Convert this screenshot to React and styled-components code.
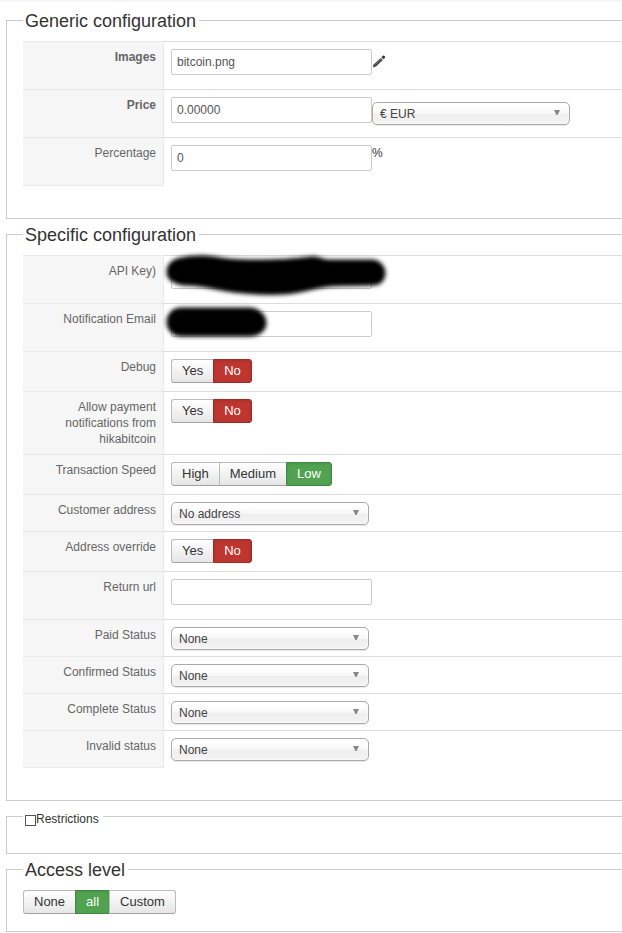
import React, { useState } from "react";
import styled, { createGlobalStyle, css } from "styled-components";

const GlobalStyle = createGlobalStyle`
  * { box-sizing: border-box; }
  body {
    margin: 0;
    background: #fff;
    color: #333;
    font: 12px/16px "Liberation Sans", Arial, Helvetica, sans-serif;
  }
  button, input, select { font: inherit; }
`;

const Page = styled.form`
  display: flex;
  flex-direction: column;
  gap: 5px;
  padding: 8px 0 0 6px;
  border-top: 2px solid #f5f5f5;
`;

const Panel = styled.fieldset`
  min-width: 0;
  margin: 0;
  padding: 10px 0 16px 16px;
  border: 1px solid #ccc;
  border-right: 0;
`;

const Title = styled.legend`
  height: 21px;
  padding: 0 3px 0 2px;
  font-size: 18px;
  line-height: 23px;
`;

const CheckTitle = styled.legend`
  height: 21px;
  padding: 5px 4px 0 2px;

  label {
    display: flex;
    align-items: center;
  }
`;

const CheckBox = styled.input`
  appearance: none;
  width: 11px;
  height: 11px;
  margin: 2px 0 0;
  border: 1px solid #555;
  background: #fff;
  &:checked { background: #555; }
`;

const SettingsTable = styled.table`
  width: 100%;
  margin-bottom: 16px;
  border-collapse: separate;
  border-spacing: 0;
  table-layout: fixed;
`;

const LabelColumn = styled.col`
  width: 141px;
`;

const LabelCell = styled.th`
  padding: 7px;
  border-top: 1px solid #e9e9e9;
  border-right: 1px solid #e9e9e9;
  background: #f6f6f6;
  color: #666;
  font-weight: ${(p) => (p.$strong ? "bold" : "normal")};
  text-align: right;
  vertical-align: top;
  tr:last-child > & { border-bottom: 1px solid #e9e9e9; }
`;

const ValueCell = styled.td`
  padding: 7px;
  border-top: 1px solid #ddd;
  vertical-align: top;
  tr:last-child > & { border-bottom: 1px solid transparent; }
`;

const ControlLine = styled.div`
  display: flex;
  align-items: flex-start;
`;

const InputWrap = styled.div`
  position: relative;
  width: 201px;
  margin-bottom: 7px;
`;

const TextInput = styled.input`
  display: block;
  width: 100%;
  height: 26px;
  padding: 4px 5px;
  border: 1px solid #ccc;
  border-radius: 2px;
  background: #fff;
  color: #555;
`;

const Redaction = styled.svg`
  position: absolute;
  left: -16px;
  top: -16px;
  overflow: visible;
  pointer-events: none;
`;

const IconButton = styled.button`
  display: flex;
  margin-top: 5px;
  padding: 0;
  border: 0;
  background: none;
`;

const SelectWrap = styled.div`
  position: relative;
  width: 198px;
  margin-top: ${(p) => (p.$lowered ? "5px" : "0")};
  margin-bottom: -1px;
`;

const Select = styled.select`
  appearance: none;
  display: block;
  width: 100%;
  height: 23px;
  padding: 0 24px 0 7px;
  border: 1px solid #aaa;
  border-radius: 5px;
  background: linear-gradient(#fff 20%, #f6f6f6 50%, #eee 52%, #f4f4f4 100%);
  box-shadow: inset 0 0 3px #fff, 0 1px 1px rgba(0, 0, 0, 0.1);
  color: #444;
`;

const Arrow = styled.svg`
  position: absolute;
  top: 8px;
  right: 10px;
  pointer-events: none;
`;

const Group = styled.div`
  display: flex;
  margin-bottom: 1px;
`;

const tones = {
  red: css`
    border-color: #a32a24;
    background: #bd362f;
    color: #fff;
  `,
  green: css`
    border-color: #3f8a41;
    background: #51a351;
    color: #fff;
  `,
};

const GroupButton = styled.button`
  height: 24px;
  padding: 0 10px;
  border: 1px solid #bbb;
  border-bottom-color: #a2a2a2;
  border-right-width: 0;
  background: linear-gradient(#fff, #e6e6e6);
  color: #333;
  font-size: 13px;
  line-height: 22px;
  &:first-child { border-radius: 3px 0 0 3px; }
  &:last-child {
    border-right-width: 1px;
    border-radius: 0 3px 3px 0;
  }
  ${(p) => p.$tone && tones[p.$tone]}
  ${(p) => p.$tone && css`box-shadow: inset 0 1px 3px rgba(0, 0, 0, 0.1);`}
`;

function Choice({ label, options, initial }) {
  const [value, setValue] = useState(initial);
  return (
    <Group role="group" aria-label={label}>
      {options.map((o) => (
        <GroupButton
          key={o}
          type="button"
          aria-pressed={o === value}
          $tone={o === value ? (o === "No" ? "red" : "green") : undefined}
          onClick={() => setValue(o)}
        >
          {o}
        </GroupButton>
      ))}
    </Group>
  );
}

function DropDown({ id, value, label, lowered }) {
  return (
    <SelectWrap $lowered={lowered}>
      <Select id={id} aria-label={label} defaultValue={value}>
        <option>{value}</option>
      </Select>
      <Arrow width="6" height="5" viewBox="0 0 6 5" aria-hidden="true">
        <path d="M0 0H6L3.6 5H2.4Z" fill="#888" />
      </Arrow>
    </SelectWrap>
  );
}

function Pencil() {
  return (
    <svg width="14" height="15" viewBox="0 0 14 15" aria-hidden="true">
      <path d="M0.8 13.6 L1.6 10.4 L8.6 3.9 L10.8 6.1 L4 12.5 Z" fill="#444" />
      <path d="M9.4 3.2 L10.9 1.8 Q11.6 1.3 12.3 1.8 L12.9 2.5 Q13.4 3.2 12.8 3.9 L11.5 5.3 Z" fill="#333" />
      <path d="M3.1 10.6 L9.1 5" stroke="#888" strokeWidth="0.8" />
    </svg>
  );
}

const marks = {
  long: "M26 11 C34 9 48 8 60 10 C75 13 90 13 105 13 C122 13 140 12 155 10 C163 9 168 13 174 13 L218 13 C226 14 230 20 230 26 C230 33 226 38 218 38 L176 39 C158 41 146 46 130 47 C112 48 94 47 78 45 C62 43 48 38 28 38 C17 36 12 32 12 25 C12 17 18 12 26 11Z",
  short: "M26 13 H94 C104 13 111 20 111 28 C111 36 104 41 94 41 H26 C17 41 12 34 12 27 C12 20 17 13 26 13Z",
};

function Field({ id, value = "", mark }) {
  return (
    <InputWrap>
      <TextInput id={id} type="text" defaultValue={value} />
      {mark && (
        <Redaction width="240" height="58" viewBox="0 0 240 58" aria-hidden="true">
          <defs>
            <filter id={`${id}-soft`} x="-10%" y="-30%" width="120%" height="160%">
              <feGaussianBlur stdDeviation="2" />
            </filter>
          </defs>
          <path d={marks[mark]} fill="#000" stroke="#000" filter={`url(#${id}-soft)`} />
        </Redaction>
      )}
    </InputWrap>
  );
}

function Row({ label, id, strong, children }) {
  return (
    <tr>
      <LabelCell scope="row" $strong={strong}>
        {id ? <label htmlFor={id}>{label}</label> : label}
      </LabelCell>
      <ValueCell>
        <ControlLine>{children}</ControlLine>
      </ValueCell>
    </tr>
  );
}

function Settings({ children }) {
  return (
    <SettingsTable>
      <colgroup>
        <LabelColumn />
        <col />
      </colgroup>
      <tbody>{children}</tbody>
    </SettingsTable>
  );
}

const yesNo = ["Yes", "No"];
const statuses = [
  ["paid", "Paid Status"],
  ["confirmed", "Confirmed Status"],
  ["complete", "Complete Status"],
  ["invalid", "Invalid status"],
];

export default function App() {
  return (
    <>
      <GlobalStyle />
      <Page>
        <Panel>
          <Title>Generic configuration</Title>
          <Settings>
            <Row label="Images" id="images" strong>
              <Field id="images" value="bitcoin.png" />
              <IconButton type="button" aria-label="Edit images">
                <Pencil />
              </IconButton>
            </Row>
            <Row label="Price" id="price" strong>
              <Field id="price" value="0.00000" />
              <DropDown id="currency" label="Currency" value="€ EUR" lowered />
            </Row>
            <Row label="Percentage" id="percentage">
              <Field id="percentage" value="0" />
              <span>%</span>
            </Row>
          </Settings>
        </Panel>

        <Panel>
          <Title>Specific configuration</Title>
          <Settings>
            <Row label="API Key)" id="api-key">
              <Field id="api-key" mark="long" />
            </Row>
            <Row label="Notification Email" id="email">
              <Field id="email" mark="short" />
            </Row>
            <Row label="Debug">
              <Choice label="Debug" options={yesNo} initial="No" />
            </Row>
            <Row label="Allow payment notifications from hikabitcoin">
              <Choice label="Allow payment notifications" options={yesNo} initial="No" />
            </Row>
            <Row label="Transaction Speed">
              <Choice label="Transaction Speed" options={["High", "Medium", "Low"]} initial="Low" />
            </Row>
            <Row label="Customer address" id="address">
              <DropDown id="address" value="No address" />
            </Row>
            <Row label="Address override">
              <Choice label="Address override" options={yesNo} initial="No" />
            </Row>
            <Row label="Return url" id="return-url">
              <Field id="return-url" />
            </Row>
            {statuses.map(([id, label]) => (
              <Row key={id} label={label} id={id}>
                <DropDown id={id} value="None" />
              </Row>
            ))}
          </Settings>
        </Panel>

        <Panel>
          <CheckTitle>
            <label>
              <CheckBox type="checkbox" />
              Restrictions
            </label>
          </CheckTitle>
        </Panel>

        <Panel>
          <Title>Access level</Title>
          <Choice label="Access level" options={["None", "all", "Custom"]} initial="all" />
        </Panel>
      </Page>
    </>
  );
}
